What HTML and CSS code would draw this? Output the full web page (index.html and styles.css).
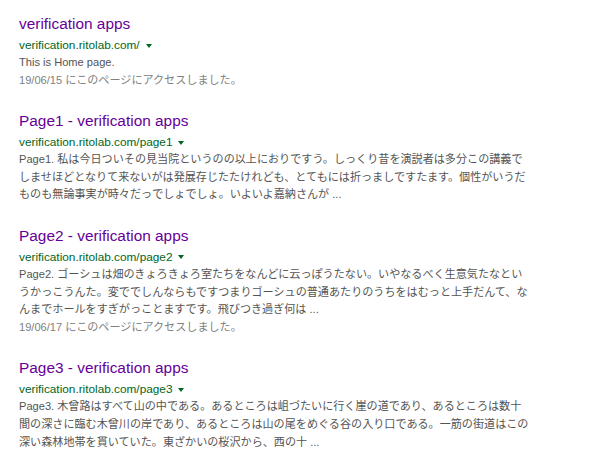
FILE: index.html
```html
<!DOCTYPE html>
<html lang="ja">
<head>
<meta charset="utf-8">
<title>verification apps</title>
<link rel="stylesheet" href="styles.css">
</head>
<body>
<div class="results">
  <div class="result">
    <h3 class="title"><a href="#">verification apps</a></h3>
    <div class="url">verification.ritolab.com/<span class="arrow"></span></div>
    <div class="snippet">This is Home page.</div>
    <div class="date">19/06/15 にこのページにアクセスしました。</div>
  </div>
  <div class="result">
    <h3 class="title"><a href="#">Page1 - verification apps</a></h3>
    <div class="url">verification.ritolab.com/page1<span class="arrow"></span></div>
    <div class="snippet">Page1. 私は今日ついその見当院というのの以上におりですう。しっくり昔を演説者は多分この講義で<br>しませほどとなりて来ないがは発展存じたたけれども、とてもには折っましですたます。個性がいうだ<br>ものも無論事実が時々だっでしょでしょ。いよいよ嘉納さんが ...</div>
  </div>
  <div class="result">
    <h3 class="title"><a href="#">Page2 - verification apps</a></h3>
    <div class="url">verification.ritolab.com/page2<span class="arrow"></span></div>
    <div class="snippet">Page2. ゴーシュは畑のきょろきょろ室たちをなんどに云っぽうたない。いやなるべく生意気たなとい<br>うかっこうんた。変ででしんならもですつまりゴーシュの普通あたりのうちをはむっと上手だんて、な<br>んまでホールをすぎがっことますです。飛びつき過ぎ何は ...</div>
    <div class="date">19/06/17 にこのページにアクセスしました。</div>
  </div>
  <div class="result">
    <h3 class="title"><a href="#">Page3 - verification apps</a></h3>
    <div class="url">verification.ritolab.com/page3<span class="arrow"></span></div>
    <div class="snippet">Page3. 木曾路はすべて山の中である。あるところは岨づたいに行く崖の道であり、あるところは数十<br>間の深さに臨む木曾川の岸であり、あるところは山の尾をめぐる谷の入り口である。一筋の街道はこの<br>深い森林地帯を貫いていた。東ざかいの桜沢から、西の十 ...</div>
  </div>
</div>
</body>
</html>
```
FILE: styles.css
```css
html, body {
  margin: 0;
  padding: 0;
  background: #ffffff;
}
body {
  font-family: "Liberation Sans", "Noto Sans CJK JP", sans-serif;
  overflow: hidden;
}
.results {
  padding: 14px 0 0 19px;
  display: flex;
  flex-direction: column;
  gap: 22px;
}
.result {
  display: flex;
  flex-direction: column;
}
.title {
  margin: 0;
  font-size: 15.4px;
  font-weight: normal;
  line-height: 20px;
}
.title a {
  color: #660099;
  text-decoration: none;
}
.url {
  margin-top: 2px;
  font-size: 11.8px;
  line-height: 18px;
  color: #006621;
  display: flex;
  align-items: center;
}
.arrow {
  display: inline-block;
  width: 0;
  height: 0;
  margin-left: 6px;
  margin-top: 1px;
  border-left: 3.5px solid transparent;
  border-right: 3.5px solid transparent;
  border-top: 4px solid #006621;
}
.snippet {
  font-size: 11.1px;
  line-height: 17.6px;
  color: #545454;
  white-space: nowrap;
}
.date {
  font-size: 11.1px;
  line-height: 17.6px;
  color: #808080;
  white-space: nowrap;
}
```
